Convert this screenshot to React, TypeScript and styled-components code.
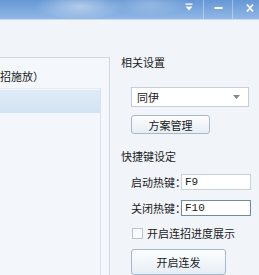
import React from "react";
import styled, { createGlobalStyle } from 'styled-components'

const Global = createGlobalStyle`
    html, body {
        margin:0;
        padding:0;
        overflow:hidden;
        background:#f1f5fa;
    }
    body {
        font-family:"Noto Sans CJK SC", "Noto Sans", sans-serif;
        font-size:11px;
        color:#1b1b1b;
    }
`

const Window = styled.div`
    width:259px;
    height:275px;
    display:flex;
    flex-direction:column;
    background:#f1f5fa;
    overflow:hidden;
`
const TitleBar = styled.div`
    height:19px;
    flex:none;
    display:flex;
    justify-content:flex-end;
    border-bottom:1px solid #c9dbef;
    background:
        radial-gradient(ellipse 45px 14px at 80px 6px, rgba(255,255,255,0.45), rgba(255,255,255,0)),
        radial-gradient(ellipse 40px 12px at 150px 4px, rgba(255,255,255,0.25), rgba(255,255,255,0)),
        linear-gradient(#6697d5, #91b8e5);
`
const Control = styled.div<{ $w: number; $shift?: number }>`
    width:${p => p.$w}px;
    height:100%;
    display:flex;
    align-items:flex-start;
    justify-content:center;
    padding-top:3px;
    padding-left:${p => p.$shift || 0}px;
    box-sizing:border-box;
    border-left:1px solid rgba(255,255,255,0.35);
    &:first-child { border-left:none; }
`
const Body = styled.div`
    flex:1;
    display:flex;
    min-height:0;
`
const LeftPanel = styled.div`
    width:110px;
    flex:none;
    margin-top:37px;
    box-sizing:border-box;
    border-top:1px solid #cfd9e4;
    border-right:1px solid #cfd9e4;
    background:#f4f7fb;
`
const Caption = styled.div`
    padding-top:11px;
    line-height:14px;
    white-space:nowrap;
`
const ListBox = styled.div`
    margin-top:5px;
    width:101px;
    height:300px;
    box-sizing:border-box;
    padding-top:1px;
    border-top:1px solid #e6ecf3;
    border-right:1px solid #dbe3ec;
    background:#f3f7fb;
`
const ListRow = styled.div<{ $selected?: boolean }>`
    height:23px;
    background:${p => p.$selected ? 'linear-gradient(#deeaf7, #d3e3f3)' : 'transparent'};
`
const RightPanel = styled.div`
    flex:1;
    padding-left:11px;
    display:flex;
    flex-direction:column;
    align-items:flex-start;
`
const Heading = styled.div<{ $top: number }>`
    margin-top:${p => p.$top}px;
    line-height:16px;
    white-space:nowrap;
`
const Select = styled.div`
    margin-top:17px;
    margin-left:10px;
    width:118px;
    height:20px;
    box-sizing:border-box;
    border:1px solid #c3ced9;
    background:#fff;
    display:flex;
    align-items:center;
    justify-content:space-between;
    padding:0 8px 0 5px;
`
const Button = styled.div<{ $w: number; $h: number; $top: number }>`
    margin-top:${p => p.$top}px;
    margin-left:10px;
    width:${p => p.$w}px;
    height:${p => p.$h}px;
    box-sizing:border-box;
    border:1px solid #a9b8c7;
    border-radius:3px;
    background:linear-gradient(#fdfeff, #e6edf4);
    display:flex;
    align-items:center;
    justify-content:center;
    white-space:nowrap;
`
const KeyRow = styled.div<{ $top: number }>`
    margin-top:${p => p.$top}px;
    margin-left:10px;
    height:16px;
    display:flex;
    align-items:center;
`
const KeyLabel = styled.span`
    width:50px;
    white-space:nowrap;
`
const KeyInput = styled.div<{ $focus?: boolean }>`
    width:70px;
    height:16px;
    box-sizing:border-box;
    border:1px solid ${p => p.$focus ? '#6f8e99' : '#c6d1db'};
    background:#fff;
    font-family:"Liberation Mono", monospace;
    font-size:11px;
    line-height:14px;
    padding-left:3px;
`
const CheckRow = styled.label`
    margin-top:11px;
    margin-left:11px;
    display:flex;
    align-items:center;
    gap:4px;
    white-space:nowrap;
    line-height:12px;
`
const CheckBox = styled.span`
    width:11px;
    height:11px;
    box-sizing:border-box;
    border:1px solid #b9c6d2;
    background:#fbfcfe;
`

export default function App(){
    return (
        <Window>
            <Global/>
            <TitleBar>
                <Control $w={28}>
                    <svg width="8" height="8" viewBox="0 0 8 8">
                        <rect x="0.5" y="0.5" width="7" height="1.3" fill="#fff"/>
                        <polygon points="0.5,3.5 7.5,3.5 4,7.5" fill="#fff"/>
                    </svg>
                </Control>
                <Control $w={29}>
                    <svg width="9" height="10" viewBox="0 0 9 10">
                        <rect x="0.5" y="4" width="8" height="2" fill="#fff"/>
                    </svg>
                </Control>
                <Control $w={27} $shift={8}>
                    <svg width="10" height="10" viewBox="0 0 10 10">
                        <path d="M2 1.5 L8 8.5 M8 1.5 L2 8.5" stroke="#fff" strokeWidth="1.8"/>
                    </svg>
                </Control>
            </TitleBar>
            <Body>
                <LeftPanel>
                    <Caption>招施放）</Caption>
                    <ListBox>
                        <ListRow $selected/>
                    </ListBox>
                </LeftPanel>
                <RightPanel>
                    <Heading $top={34}>相关设置</Heading>
                    <Select>
                        <span>同伊</span>
                        <svg width="7" height="4" viewBox="0 0 7 4">
                            <polygon points="0,0 7,0 3.5,4" fill="#7d8894"/>
                        </svg>
                    </Select>
                    <Button $w={79} $h={20} $top={8}>方案管理</Button>
                    <Heading $top={14}>快捷键设定</Heading>
                    <KeyRow $top={10}>
                        <KeyLabel>启动热键：</KeyLabel>
                        <KeyInput>F9</KeyInput>
                    </KeyRow>
                    <KeyRow $top={10}>
                        <KeyLabel>关闭热键：</KeyLabel>
                        <KeyInput $focus>F10</KeyInput>
                    </KeyRow>
                    <CheckRow>
                        <CheckBox/>
                        开启连招进度展示
                    </CheckRow>
                    <Button $w={95} $h={26} $top={10}>开启连发</Button>
                </RightPanel>
            </Body>
        </Window>
    )
};
